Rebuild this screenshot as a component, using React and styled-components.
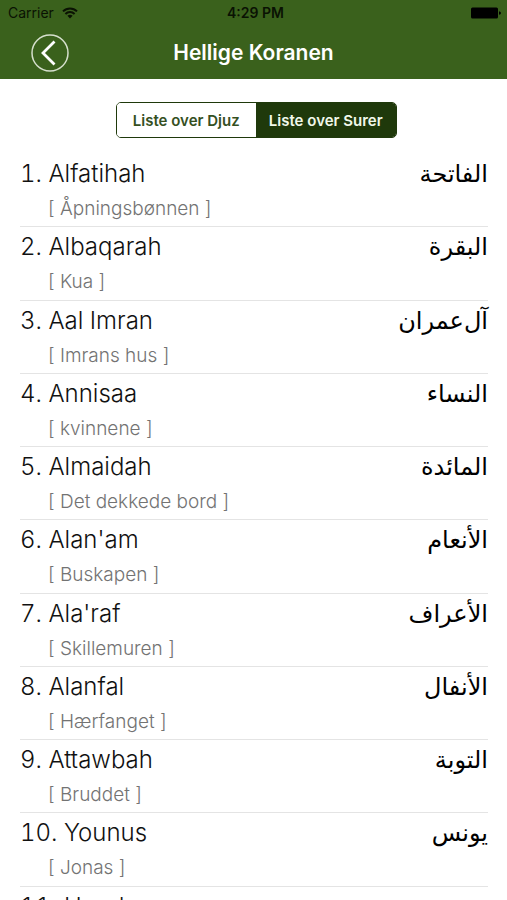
import { useState } from 'react'
import styled, { createGlobalStyle } from 'styled-components'


const GlobalStyle = createGlobalStyle`
    * { box-sizing: border-box; }

    body {
        margin: 0;
        background: #ffffff;
        font-family: Inter, "Liberation Sans", sans-serif;
    }
`

const Screen = styled.div`
    height: 100vh;
    display: flex;
    flex-direction: column;
    overflow: hidden;
`

const Header = styled.header`
    flex: none;
    background: #3a611c;
`

const StatusBar = styled.div`
    display: grid;
    grid-template-columns: 1fr auto 1fr;
    align-items: center;
    height: 26px;
    padding: 0 6px 0 8px;
    color: #0a1203;
    font-size: 14px;
    line-height: 16px;
`

const Carrier = styled.span`
    display: flex;
    align-items: center;
    gap: 8px;
`

const Clock = styled.span`
    padding-left: 2px;
    font-weight: 600;
`

const Battery = styled.span`
    display: flex;
    justify-content: flex-end;
`

const NavBar = styled.div`
    display: grid;
    grid-template-columns: 1fr auto 1fr;
    align-items: center;
    height: 53px;
    padding: 0 30px;
`

const BackButton = styled.button`
    display: flex;
    width: 40px;
    height: 40px;
    padding: 0;
    border: none;
    background: none;
`

const Title = styled.h1`
    margin: 0;
    color: #ffffff;
    font-size: 21px;
    line-height: 26px;
    font-weight: 600;
`

const Segmented = styled.div`
    flex: none;
    display: grid;
    grid-template-columns: 1fr 1fr;
    align-self: center;
    width: 281px;
    height: 36px;
    margin: 23px 0 16px 5px;
    border: 1px solid #1f390b;
    border-radius: 5px;
    overflow: hidden;
`

const Segment = styled.button`
    padding: 0;
    border: none;
    background: ${(props) => props.$active ? '#1f390b' : '#ffffff'};
    color: ${(props) => props.$active ? '#f1f8ea' : '#35501f'};
    font-family: inherit;
    font-size: 15px;
    font-weight: 600;
`

// equal rows, the last one runs off the bottom of the screen
const List = styled.ol`
    flex: none;
    display: grid;
    grid-auto-rows: 1fr;
    min-height: 806px;
    margin: 0;
    padding: 0 19px 0 20px;
    list-style: none;
`

const Row = styled.li`
    display: flex;
    justify-content: space-between;
    align-items: flex-start;
    padding-top: 4px;
    border-bottom: 1px solid #e4e4e4;
`

const Name = styled.div`
    color: #111111;
    font-size: 24px;
    font-weight: 300;
    font-variant-numeric: tabular-nums;
    line-height: 32px;
`

const Meaning = styled.div`
    padding: 4px 0 0 28px;
    color: #737373;
    font-size: 19px;
    font-weight: 300;
    line-height: 30px;
`

const Arabic = styled.div`
    color: #000000;
    font-family: "DejaVu Sans", sans-serif;
    font-size: 24px;
    line-height: 32px;
`


const WifiIcon = () => {
    return <svg width="16" height="12" viewBox="0 0 16 12" fill="none" stroke="currentColor" strokeWidth="2">
                <path d="M1 4.4C5 .4 11 .4 15 4.4" />
                <path d="M3.4 7C6 4.4 10 4.4 12.6 7" />
                <path d="M5.4 8.8Q8 6.6 10.6 8.8L8 11.4Z" fill="currentColor" stroke="none" />
           </svg>
}

const BatteryIcon = () => {
    return <svg width="30" height="12" viewBox="0 0 30 12" fill="#000000">
                <rect x="0" y="0.5" width="27" height="11" rx="1.5" />
                <path d="M28 4.2q2 .4 2 1.8t-2 1.8z" />
           </svg>
}

const BackIcon = () => {
    return <svg width="40" height="40" viewBox="0 0 40 40" fill="none" stroke="#ffffff">
                <circle cx="20" cy="20" r="18" strokeWidth="1.5" stroke="#d5dfcc" />
                <path d="M24.5 8.5L13 20L24.5 31.5" strokeWidth="2.8" />
           </svg>
}


// zero-width non-joiner keeps the two words of "Aal Imran" apart without a gap
const surahs = [
    { name: 'Alfatihah', meaning: 'Åpningsbønnen', arabic: 'الفاتحة' },
    { name: 'Albaqarah', meaning: 'Kua', arabic: 'البقرة' },
    { name: 'Aal Imran', meaning: 'Imrans hus', arabic: 'آل\u200cعمران' },
    { name: 'Annisaa', meaning: 'kvinnene', arabic: 'النساء' },
    { name: 'Almaidah', meaning: 'Det dekkede bord', arabic: 'المائدة' },
    { name: "Alan'am", meaning: 'Buskapen', arabic: 'الأنعام' },
    { name: "Ala'raf", meaning: 'Skillemuren', arabic: 'الأعراف' },
    { name: 'Alanfal', meaning: 'Hærfanget', arabic: 'الأنفال' },
    { name: 'Attawbah', meaning: 'Bruddet', arabic: 'التوبة' },
    { name: 'Younus', meaning: 'Jonas', arabic: 'يونس' },
    { name: 'Houd', meaning: 'Hud', arabic: 'هود' },
]

const tabs = ['Liste over Djuz', 'Liste over Surer']


const App = () => {
    const [active, setActive] = useState(tabs[1])

    return <Screen>
                <GlobalStyle />
                <Header>
                    <StatusBar>
                        <Carrier>Carrier <WifiIcon /></Carrier>
                        <Clock>4:29 PM</Clock>
                        <Battery><BatteryIcon /></Battery>
                    </StatusBar>
                    <NavBar>
                        <BackButton type="button" aria-label="Tilbake"><BackIcon /></BackButton>
                        <Title>Hellige Koranen</Title>
                    </NavBar>
                </Header>
                <Segmented>
                    {tabs.map((tab) => (
                        <Segment
                            key={tab}
                            type="button"
                            $active={tab === active}
                            aria-pressed={tab === active}
                            onClick={() => setActive(tab)}
                        >
                            {tab}
                        </Segment>
                    ))}
                </Segmented>
                <List>
                    {surahs.map((surah, i) => (
                        <Row key={surah.name}>
                            <div>
                                <Name>{i + 1}. {surah.name}</Name>
                                <Meaning>[ {surah.meaning} ]</Meaning>
                            </div>
                            <Arabic lang="ar" dir="rtl">{surah.arabic}</Arabic>
                        </Row>
                    ))}
                </List>
           </Screen>
}

export default App
